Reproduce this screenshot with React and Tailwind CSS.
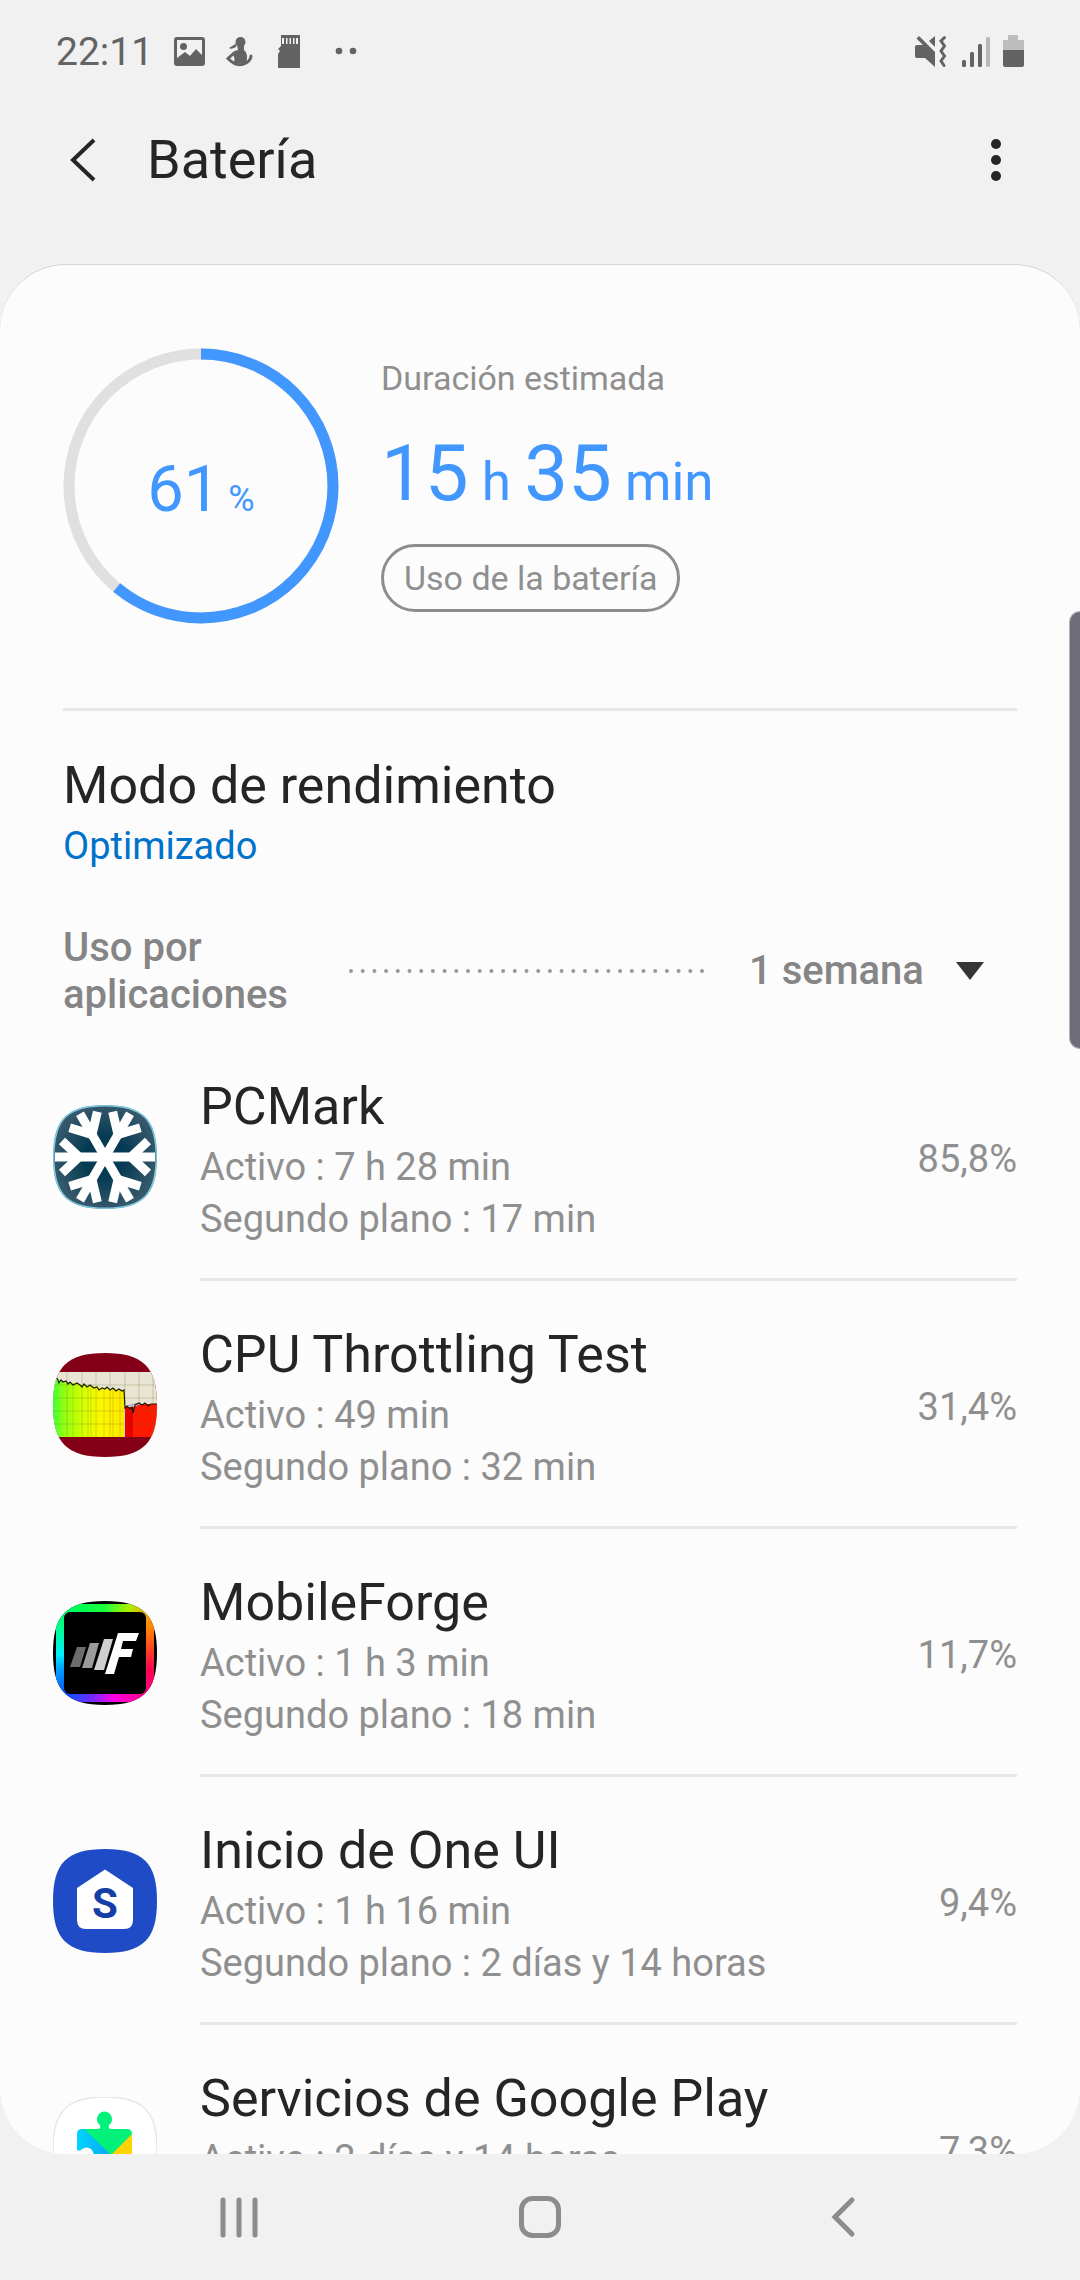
import React from 'react';

const SQUIRCLE = 'M52 0C90 0 104 14 104 52C104 90 90 104 52 104C14 104 0 90 0 52C0 14 14 0 52 0Z';

const PcMarkIcon = () => (
  <svg viewBox="0 0 104 104" className="size-26">
    <defs>
      <radialGradient id="frost">
        <stop offset="0.4" stopColor="#053b52" />
        <stop offset="1" stopColor="#35586b" />
      </radialGradient>
      <clipPath id="frost-clip">
        <path d={SQUIRCLE} />
      </clipPath>
    </defs>
    <g clipPath="url(#frost-clip)">
      <path d={SQUIRCLE} fill="url(#frost)" stroke="#7fc9e0" strokeWidth="3" />
      <g stroke="#fff" strokeWidth="9" fill="none">
        {[0, 60, 120, 180, 240, 300].map((angle) => (
          <g key={angle} transform={`rotate(${angle} 52 52)`}>
            <path d="M52 52H102" />
            <path d="M95 36L78 52L95 68" />
          </g>
        ))}
      </g>
    </g>
  </svg>
);

const ThrottlingIcon = () => (
  <svg viewBox="0 0 104 104" className="size-26">
    <defs>
      <linearGradient id="heat">
        <stop offset="0" stopColor="#3dff3a" />
        <stop offset="0.14" stopColor="#8dff12" />
        <stop offset="0.45" stopColor="#d8ff00" />
        <stop offset="0.7" stopColor="#fff600" />
        <stop offset="1" stopColor="#ffe600" />
      </linearGradient>
      <clipPath id="heat-clip">
        <path d={SQUIRCLE} />
      </clipPath>
    </defs>
    <g clipPath="url(#heat-clip)">
      <rect width="104" height="104" fill="#840016" />
      <rect y="19" width="104" height="65" fill="#e8e5d4" />
      <path d="M0 24L5 27L8 29L20 30L30 32L45 34L58 36L71 37V84H0Z" fill="url(#heat)" />
      <path d="M72 54H80L88 51H104V84H72Z" fill="#ff1a00" />
      <path d="M72 54H80V84H72Z" fill="#e80000" />
      <path
        d="M14 19V84M29 19V84M43 19V84M57 19V84M72 19V84M86 19V84M100 19V84M0 32H104M0 45H104M0 58H104M0 71H104"
        stroke="#6b6b20"
        strokeOpacity="0.25"
        fill="none"
      />
      <path d="M20 30V84M35 33V84M38 33V84M51 35V84M60 36V84M67 37V84" stroke="#b0b800" strokeOpacity="0.5" />
      <path d="M74 53L82 51L86 51" stroke="#8a8ad8" fill="none" />
      <path
        d="M3 24L5 27L6 30L8 27L10 29L13 28L15 31L17 29L20 32L24 30L27 32L29 34L31 31L34 34L37 32L41 35L44 34L46 37L49 35L52 36L54 34L57 37L60 35L63 38L66 36L69 38L71 37L72 55L74 53L77 56L79 54L80 60L82 52L86 50L89 52L92 50L95 53L98 51L104 51"
        fill="none"
        stroke="#1b1b08"
        strokeWidth="1.2"
      />
    </g>
  </svg>
);

const ForgeIcon = () => (
  <svg viewBox="0 0 104 104" className="size-26">
    <defs>
      <clipPath id="forge-clip">
        <path d={SQUIRCLE} />
      </clipPath>
    </defs>
    <g clipPath="url(#forge-clip)">
      <rect width="104" height="104" />
      <foreignObject x="3" y="3" width="98" height="98">
        <div className="size-full bg-[conic-gradient(#1cff3c_0deg,#a8f000_28deg,#ff9a00_52deg,#ff4a1c_82deg,#ff0055_112deg,#ff0090_140deg,#ff00e6_168deg,#6a2cff_198deg,#0a50ff_222deg,#00a0ff_250deg,#00f0ff_268deg,#00ff8c_300deg,#00ff50_330deg,#1cff3c_360deg)]" />
      </foreignObject>
      <rect x="11" y="11" width="82" height="82" rx="6" />
      <path d="M24 46H33L27 66H17Z" fill="#6c6c6c" />
      <path d="M37 42H46L39 67H29Z" fill="#9b9b9b" />
      <path d="M51 38H60L51 69H41Z" fill="#cfcfcf" />
      <path d="M65 32H86L83 40H70L68 48H80L78 56H66L61 73H52Z" fill="#fff" />
    </g>
  </svg>
);

const OneUiIcon = () => (
  <svg viewBox="0 0 104 104" className="size-26">
    <path d={SQUIRCLE} fill="#1f4bc6" />
    <path d="M52 20.500L80 39V71Q80 80 71 80H33Q24 80 24 71V39Z" fill="#fff" />
    <text x="52" y="69" textAnchor="middle" fill="#153fa6" fontSize="42" fontWeight="700" fontFamily="Roboto, sans-serif">
      S
    </text>
  </svg>
);

const PlayServicesIcon = () => (
  <svg viewBox="0 0 104 104" className="size-26">
    <defs>
      <linearGradient id="piece" x1="0" y1="0" x2="1" y2="0">
        <stop offset="0" stopColor="#00d4ff" />
        <stop offset="1" stopColor="#0ba5f5" />
      </linearGradient>
    </defs>
    <path d={SQUIRCLE} fill="#fff" stroke="#e6e6e6" strokeWidth="1.500" />
    <path d="M29 32H34L58 57V86H24V37Q24 32 29 32Z" fill="url(#piece)" />
    <path d="M79 36V86H54V60Z" fill="#ffd400" />
    <path d="M31 32H45Q48 32 47 28Q44 26 44 22A7.500 7.500 0 0 1 59 22Q59 26 56 28Q55 32 58 32H74Q79 32 79 37L58 58Z" fill="#02f17a" />
    <path d="M24 53Q27 55 29 52Q34 49 38 52Q41 55 41 59Q40 66 33 66Q29 66 27 64L24 66Z" fill="#fff" />
  </svg>
);

const apps = [
  { name: 'PCMark', active: '7 h 28 min', background: '17 min', usage: '85,8%', Icon: PcMarkIcon },
  { name: 'CPU Throttling Test', active: '49 min', background: '32 min', usage: '31,4%', Icon: ThrottlingIcon },
  { name: 'MobileForge', active: '1 h 3 min', background: '18 min', usage: '11,7%', Icon: ForgeIcon },
  { name: 'Inicio de One UI', active: '1 h 16 min', background: '2 días y 14 horas', usage: '9,4%', Icon: OneUiIcon },
  { name: 'Servicios de Google Play', active: '2 días y 14 horas', background: '', usage: '7,3%', Icon: PlayServicesIcon },
];

const StatusBar = () => (
  <div className="flex h-26 items-center justify-between pr-[55px] pl-14 text-[#636363]">
    <div className="flex items-center">
      <span className="text-[39px] leading-[44px]">22:11</span>
      <svg viewBox="0 0 184 34" className="ml-[21px] h-[34px] w-[184px]" fill="currentColor">
        {/* picture */}
        <path
          fillRule="evenodd"
          d="M3 2H28Q31 2 31 5V28Q31 31 28 31H3Q0 31 0 28V5Q0 2 3 2ZM3 5V23L11 17L16 21L22 14L28 20V5Z"
        />
        <circle cx="9.500" cy="11.500" r="3.500" />
        {/* figure */}
        <circle cx="66.500" cy="7" r="5" />
        <path d="M63 8L55 13Q57 15 62 12Z" />
        <path d="M63 10H70V15Q75 19 72 28L59 29Q62 24 59 20Q58 16 64 15Z" />
        <path
          d="M60 18L54 23.500Q63 33 72 28Q77 25 77 21"
          fill="none"
          stroke="currentColor"
          strokeWidth="3"
          strokeLinecap="round"
        />
        {/* memory card */}
        <path
          fillRule="evenodd"
          d="M107 0H126V33H104V19L106 16L104 14L107 11ZM108 3V9H110V3ZM112 3V9H113.500V3ZM115.500 3V9H117V3ZM119 3V9H120.500V3ZM122 3V9H124V3Z"
        />
        <circle cx="165" cy="16" r="3.300" />
        <circle cx="179" cy="16" r="3.300" />
      </svg>
    </div>
    <svg viewBox="0 0 110 34" className="h-[34px] w-[110px]" fill="currentColor">
      {/* muted speaker with vibration */}
      <path d="M2 10H8L1.500 3.500L4 1L20 17V32L10 23H2Q0 23 0 21V12Q0 10 2 10Z" />
      <path d="M14 6L20 1V12Z" />
      <path d="M29.500 2.500L26 6L29.500 11L26 16L29.500 21L26 26L29 30.500" fill="none" stroke="currentColor" strokeWidth="3" strokeLinecap="round" />
      {/* signal */}
      <rect x="47" y="25" width="4" height="7" rx="1.500" />
      <rect x="55" y="17" width="4" height="15" rx="1.500" />
      <rect x="63" y="9" width="4" height="23" rx="1.500" />
      <rect x="71" y="2" width="4" height="30" rx="1.500" fill="#b8b8b8" />
      {/* battery */}
      <path d="M94 0H102Q103 0 103 1V5H109V16H88V5H93V1Q93 0 94 0Z" fill="#bdbdbd" />
      <path d="M88 15H109V30Q109 32 107 32H90Q88 32 88 30Z" />
    </svg>
  </div>
);

const BatteryRing = ({ level }) => {
  const length = 2 * Math.PI * 132;
  return (
    <div className="relative size-69 shrink-0">
      <svg viewBox="0 0 276 276" className="size-full -rotate-90" fill="none" strokeWidth="11">
        <circle cx="138" cy="138" r="132" stroke="#e0e0e0" />
        <circle cx="138" cy="138" r="132" stroke="#4297ff" strokeDasharray={`${(length * level) / 100} ${length}`} />
      </svg>
      <div className="absolute inset-0 flex items-center justify-center pt-4 text-[#4297ff]">
        <p className="flex items-baseline gap-2 text-[65px] leading-[80px]">
          {level}
          <span className="text-[36px]">%</span>
        </p>
      </div>
    </div>
  );
};

const AppRow = ({ name, active, background, usage, Icon }) => (
  <li className="flex items-stretch">
    <div className="flex w-[147px] shrink-0 items-center">
      <Icon />
    </div>
    <div className="flex flex-1 items-center justify-between border-b-3 border-[#e6e6e6] pt-10 pb-[33px]">
      <div>
        <h2 className="text-[52px] leading-[68px]">{name}</h2>
        <p className="text-[38px] leading-[52px] text-[#8f8f8f]">Activo : {active}</p>
        <p className="min-h-13 text-[38px] leading-[52px] text-[#8f8f8f]">
          {background && `Segundo plano : ${background}`}
        </p>
      </div>
      <span className="text-[38px] leading-[52px] text-[#8f8f8f]">{usage}</span>
    </div>
  </li>
);

const App = () => (
  <div className="relative flex h-screen flex-col overflow-hidden bg-[#f1f1f1] font-['Roboto',sans-serif] text-[#252525]">
    <StatusBar />

    <header className="flex h-40 items-start justify-between pr-15 pl-17">
      <div className="flex items-center gap-[51px]">
        <button type="button" aria-label="Atrás" className="h-28">
          <svg viewBox="0 0 28 44" className="h-11 w-7" fill="none" stroke="currentColor" strokeWidth="4">
            <path d="M26 2L5 22L26 42" />
          </svg>
        </button>
        <h1 className="text-[54px] leading-[64px]">Batería</h1>
      </div>
      <button type="button" aria-label="Más opciones" className="h-28">
        <svg viewBox="0 0 48 44" className="h-11 w-12" fill="currentColor">
          <circle cx="24" cy="6" r="5" />
          <circle cx="24" cy="22" r="5" />
          <circle cx="24" cy="38" r="5" />
        </svg>
      </button>
    </header>

    <main className="min-h-0 flex-1 overflow-hidden rounded-[66px] border-t border-[#d5d5d5] bg-[#fcfcfc]">
      <section className="mx-[63px] flex items-start gap-[42px] border-b-3 border-[#e6e6e6] pt-[83px] pb-[84px]">
        <BatteryRing level={61} />
        <div className="pt-2">
          <p className="text-[34px] leading-[44px] text-[#8f8f8f]">Duración estimada</p>
          <p className="mt-7 text-[53px] leading-[92px] text-[#4297ff]">
            <span className="text-[78px]">15</span> h <span className="text-[78px]">35</span> min
          </p>
          <button
            type="button"
            className="mt-4 flex h-17 items-center rounded-full border-3 border-[#8d8d8d] px-5 text-[34px] leading-[44px] text-[#8f8f8f]"
          >
            Uso de la batería
          </button>
        </div>
      </section>

      <section className="mx-[63px] pt-[41px]">
        <h2 className="text-[52px] leading-[68px]">Modo de rendimiento</h2>
        <p className="text-[38px] leading-[52px] text-[#0072ca]">Optimizado</p>
      </section>

      <section className="mx-[63px] flex items-center pt-13 text-[40px] font-medium text-[#858585]">
        <h2 className="w-[286px] leading-[47px]">Uso por aplicaciones</h2>
        <svg className="h-1 w-[356px]" fill="none" stroke="#999" strokeWidth="4" strokeLinecap="round" aria-hidden="true">
          <path d="M2 2H356" strokeDasharray="0 11.700" />
        </svg>
        <label className="relative ml-11 flex items-center">
          <select aria-label="Periodo" className="w-[235px] appearance-none bg-transparent leading-[48px] outline-none">
            <option>1 semana</option>
          </select>
          <svg viewBox="0 0 28 18" className="pointer-events-none absolute right-0 h-[18px] w-7" fill="#353535">
            <path d="M0 0H28L14 18Z" />
          </svg>
        </label>
      </section>

      <ul className="mr-[63px] ml-[53px] pt-[15px]">
        {apps.map((app) => (
          <AppRow key={app.name} {...app} />
        ))}
      </ul>
    </main>

    <nav className="flex h-[126px] shrink-0 items-center justify-between px-54 text-[#8c8c8c]">
      <button type="button" aria-label="Recientes">
        <svg viewBox="0 0 48 44" className="h-11 w-12" stroke="currentColor" strokeWidth="5" strokeLinecap="round">
          <path d="M7 5V40M23 5V40M39 5V40" />
        </svg>
      </button>
      <button type="button" aria-label="Inicio">
        <svg viewBox="0 0 44 44" className="size-11" fill="none" stroke="currentColor" strokeWidth="5">
          <rect x="3.500" y="3.500" width="37" height="37" rx="11" />
        </svg>
      </button>
      <button type="button" aria-label="Volver">
        <svg viewBox="0 0 48 44" className="h-11 w-12" fill="none" stroke="currentColor" strokeWidth="5" strokeLinecap="round">
          <path d="M36 5L19 22L36 39" />
        </svg>
      </button>
    </nav>

    {/* edge panel handle */}
    <div className="absolute top-[611px] right-0 h-[438px] w-[11px] rounded-l-xl border border-r-0 border-[#b3b2b7] bg-[#6f6c7a]" />
  </div>
);

export default App;
